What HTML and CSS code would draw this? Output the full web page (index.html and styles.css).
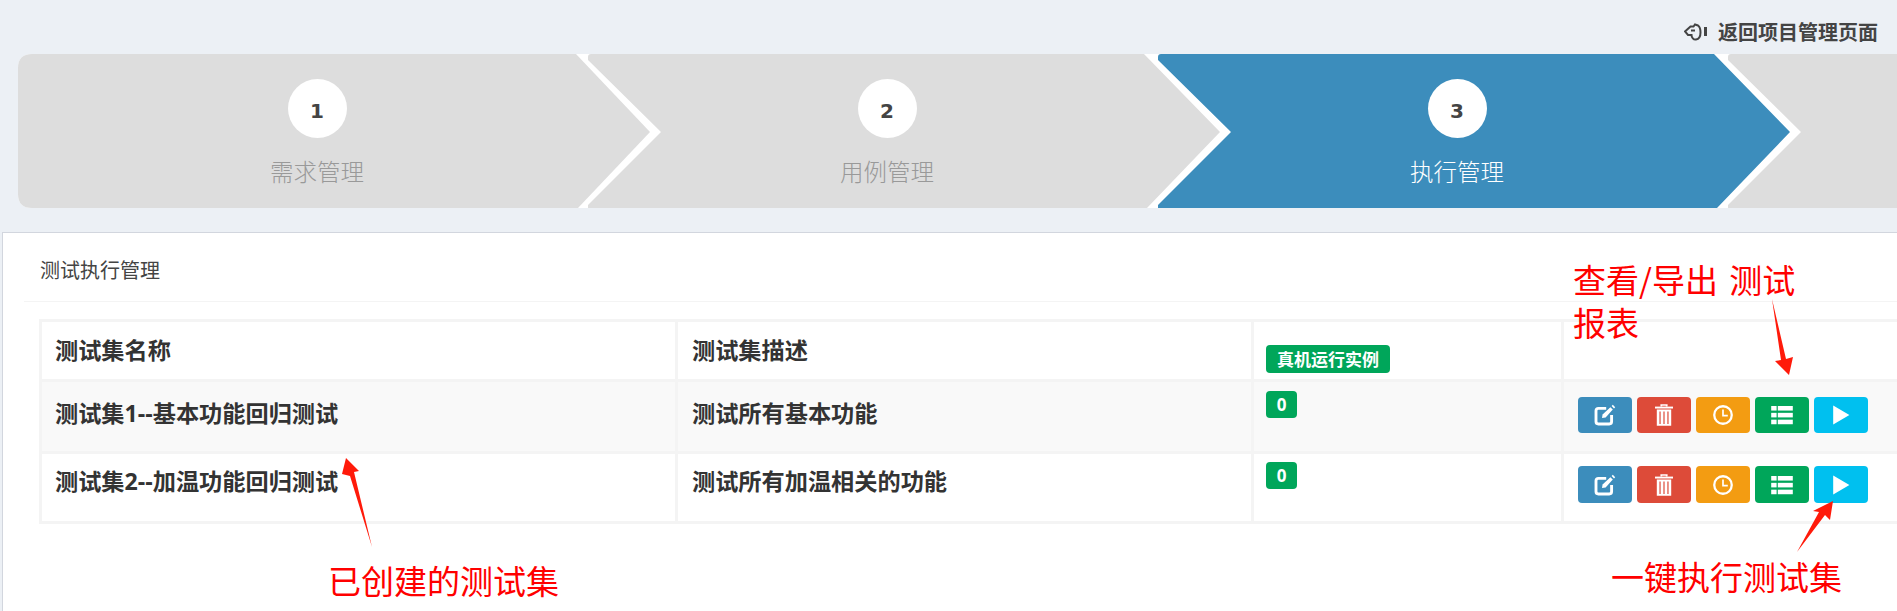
FILE: index.html
```html
<!DOCTYPE html>
<html lang="zh">
<head>
<meta charset="utf-8">
<title>测试执行管理</title>
<link rel="stylesheet" href="styles.css">
</head>
<body>
<header class="topbar">
  <a class="back-link">
    <svg class="back-icon" viewBox="0 0 23 19"><path d="M1 9.500 6.500 4.500H9.500L11 2.500 14 3.500C16 5 16.500 7 16.500 10.500 16.500 14 15 17 12 17.500 9.500 18 7.500 15.500 7.500 13H4L1 9.500Z M7 8.500H11" fill="none" stroke="#444" stroke-width="2"/><rect x="20" y="5" width="3" height="9" fill="#444"/></svg>
    <span>返回项目管理页面</span>
  </a>
</header>
<ol class="steps">
  <li class="step step-first">
    <span class="num">1</span>
    <span class="step-label">需求管理</span>
  </li>
  <li class="step">
    <span class="num">2</span>
    <span class="step-label">用例管理</span>
  </li>
  <li class="step step-active">
    <span class="num">3</span>
    <span class="step-label">执行管理</span>
  </li>
  <li class="step step-last"></li>
</ol>
<main class="panel">
  <h2 class="panel-title">测试执行管理</h2>
  <table class="grid">
    <colgroup>
      <col class="col-name"><col class="col-desc"><col class="col-count"><col class="col-ops">
    </colgroup>
    <tr class="row-head">
      <td>测试集名称</td>
      <td>测试集描述</td>
      <td class="cell-badge-head"><span class="badge badge-head">真机运行实例</span></td>
      <td></td>
    </tr>
    <tr class="row-odd">
      <td>测试集1--基本功能回归测试</td>
      <td>测试所有基本功能</td>
      <td><span class="badge">0</span></td>
      <td>
        <div class="ops">
          <button class="op op-blue"><svg viewBox="0 0 20 20"><use href="#i-edit"/></svg></button>
          <button class="op op-red"><svg viewBox="0 0 20 20"><use href="#i-trash"/></svg></button>
          <button class="op op-orange"><svg viewBox="0 0 20 20"><use href="#i-clock"/></svg></button>
          <button class="op op-green"><svg viewBox="0 0 20 20"><use href="#i-list"/></svg></button>
          <button class="op op-cyan"><svg viewBox="0 0 20 20"><use href="#i-play"/></svg></button>
        </div>
      </td>
    </tr>
    <tr class="row-even">
      <td>测试集2--加温功能回归测试</td>
      <td>测试所有加温相关的功能</td>
      <td><span class="badge">0</span></td>
      <td>
        <div class="ops">
          <button class="op op-blue"><svg viewBox="0 0 20 20"><use href="#i-edit"/></svg></button>
          <button class="op op-red"><svg viewBox="0 0 20 20"><use href="#i-trash"/></svg></button>
          <button class="op op-orange"><svg viewBox="0 0 20 20"><use href="#i-clock"/></svg></button>
          <button class="op op-green"><svg viewBox="0 0 20 20"><use href="#i-list"/></svg></button>
          <button class="op op-cyan"><svg viewBox="0 0 20 20"><use href="#i-play"/></svg></button>
        </div>
      </td>
    </tr>
  </table>
</main>

<div class="note note-report">查看/导出 测试<br>报表</div>
<div class="note note-sets">已创建的测试集</div>
<div class="note note-run">一键执行测试集</div>

<svg class="arrows" viewBox="0 0 1897 611">
  <polygon points="1772,299 1786,359 1793,357 1789,375 1775,361 1781,360" fill="#ff1a0a"/>
  <polygon points="346,458 359,471 354,472 372,547 350,476 342,474" fill="#ff1a0a"/>
  <polygon points="1833,501 1830,520 1825,515 1797,552 1819,512 1813,511" fill="#ff1a0a"/>
</svg>

<svg class="defs" width="0" height="0">
  <defs>
    <g id="i-edit" fill="none" stroke="#fff">
      <path d="M11 4.500H4.500Q2.500 4.500 2.500 6.500V15.500Q2.500 17.500 4.500 17.500H13.500Q15.500 17.500 15.500 15.500V10" stroke-width="2.400"/>
      <path d="M7.500 12.500 8 9.500 14.500 3.500 16.500 5.500 10.500 12Z" fill="#fff" stroke="none"/>
      <path d="M15.500 2.500 16.500 1.500 18.500 3.500 17.500 4.500Z" fill="#fff" stroke="none"/>
    </g>
    <g id="i-trash" fill="#fff">
      <rect x="2.500" y="3" width="15" height="1.600"/>
      <path d="M7 3V1H13V3H11.500V2.300H8.500V3Z"/>
      <path d="M4 5.500H16V19H4ZM6.200 7V17.500H7.200V7ZM9.500 7V17.500H10.500V7ZM12.800 7V17.500H13.800V7Z" fill-rule="evenodd"/>
    </g>
    <g id="i-clock" fill="none" stroke="#fff">
      <circle cx="10" cy="10" r="7.300" stroke-width="1.900"/>
      <path d="M10 5.500V10.500H14" stroke-width="1.400"/>
    </g>
    <g id="i-list" fill="#fff">
      <rect x="1" y="2.500" width="4.500" height="3.800"/>
      <rect x="6.500" y="2.500" width="12.500" height="3.800"/>
      <rect x="1" y="8.200" width="4.500" height="3.800"/>
      <rect x="6.500" y="8.200" width="12.500" height="3.800"/>
      <rect x="1" y="13.900" width="4.500" height="3.800"/>
      <rect x="6.500" y="13.900" width="12.500" height="3.800"/>
    </g>
    <g id="i-play" fill="#fff"><path d="M3.500 2 17 10 3.500 18Z"/></g>
  </defs>
</svg>
</body>
</html>
```

FILE: styles.css
```css
* { box-sizing: border-box; }

html, body {
  margin: 0;
  height: 611px;
  overflow: hidden;
}

body {
  position: relative;
  background: #ecf0f5;
  font-family: "Open Sans", "Noto Sans CJK SC", sans-serif;
  color: #333;
}

.topbar {
  display: flex;
  justify-content: flex-end;
  height: 54px;
  padding: 17px 19px 0 0;
}

.back-link {
  display: flex;
  align-items: center;
  height: 28px;
  gap: 11px;
  font-size: 20px;
  font-weight: 700;
  color: #444;
}

.back-icon { width: 23px; height: 19px; }

.steps {
  display: flex;
  margin: 0;
  padding: 0 0 0 18px;
  list-style: none;
  height: 154px;
}

.step {
  position: relative;
  flex: 0 0 570px;
  height: 154px;
  padding-top: 25px;
  color: #999;
  display: flex;
  flex-direction: column;
  align-items: center;
}

.step > * { position: relative; z-index: 2; transform: translateX(14px); }

.step::before,
.step::after {
  content: "";
  position: absolute;
  top: 0;
  left: 0;
  width: 660px;
  height: 154px;
}

.step::before {
  z-index: 0;
  background: #fff;
  clip-path: path("M0 0H572L646 78 572 154H0L72 78Z");
}

.step::after {
  z-index: 1;
  background: #ddd;
  clip-path: path("M0 6 73 78 0 151V154H559L632 78 556 0H3Q0 0 0 3Z");
}

.step-first::before { clip-path: path("M14 0H572L646 78 572 154H14Q0 154 0 140V14Q0 0 14 0Z"); }

.step-first::after {
  clip-path: path("M14 0H558L632 78 560 154H14Q0 154 0 140V14Q0 0 14 0Z");
}

.step-active { color: #fff; }
.step-active::after { background: #3c8dbc; }

.step-last::before { background: transparent; }

.num {
  display: flex;
  align-items: center;
  justify-content: center;
  width: 59px;
  height: 59px;
  padding-top: 4px;
  border-radius: 50%;
  background: #fff;
  color: #444;
  font-family: "DejaVu Sans", sans-serif;
  font-size: 20px;
  font-weight: 700;
}

.step-label {
  margin-top: 17px;
  font-size: 23.500px;
  font-weight: 300;
  line-height: 34px;
}

.panel {
  margin-top: 24px;
  margin-left: 2px;
  height: 400px;
  padding: 0 0 0 21px;
  background: #fff;
  border-top: 1px solid #d2d6de;
  border-left: 1px solid #d2d6de;
}

.panel-title {
  margin: 0;
  height: 69px;
  padding: 24px 0 0 16px;
  border-bottom: 1px solid #f4f4f4;
  font-size: 20px;
  font-weight: 400;
  line-height: 28px;
  color: #444;
}

.grid {
  margin: 17px 0 0 15px;
  width: 1900px;
  border-collapse: collapse;
  table-layout: fixed;
  font-size: 23.200px;
  font-weight: 700;
}

.col-name { width: 636px; }
.col-desc { width: 576px; }
.col-count { width: 310px; }
.col-ops { width: 378px; }

.grid td {
  border: 3px solid #f4f4f4;
  padding: 14px 14px 0 13px;
  vertical-align: top;
  line-height: 32px;
}

.grid td:nth-child(2),
.grid td:nth-child(4) { padding-left: 14px; }
.grid td:nth-child(3) { padding-left: 12px; }

.row-head { height: 60px; }
.row-odd { height: 72px; background: #f9f9f9; }
.row-even { height: 70px; }

.row-head td { padding-top: 12px; }
.row-head .cell-badge-head { padding-top: 23px; }

.row-odd td { padding-top: 15px; }
.row-even td { padding-top: 11px; }

.row-odd td:nth-child(3) { padding-top: 9px; }
.row-even td:nth-child(3) { padding-top: 8px; }
.row-odd td:nth-child(4) { padding-top: 15px; }
.row-even td:nth-child(4) { padding-top: 12px; }

.badge {
  display: inline-flex;
  align-items: center;
  justify-content: center;
  height: 27px;
  width: 31px;
  border-radius: 4px;
  background: #00a65a;
  color: #fff;
  font-size: 17px;
  font-weight: 700;
  line-height: 1;
  vertical-align: top;
}

.badge-head {
  height: 28px;
  width: 124px;
}

.ops { display: flex; gap: 5px; }

.op {
  display: flex;
  align-items: center;
  justify-content: center;
  width: 54px;
  height: 36px;
  padding: 0;
  border: 0;
  border-radius: 4px;
}

.row-even .op { height: 37px; }

.op svg { width: 24px; height: 24px; display: block; }

.op-blue { background: #3c8dbc; }
.op-red { background: #dd4b39; }
.op-orange { background: #f39c12; }
.op-green { background: #00a65a; }
.op-cyan { background: #00c0ef; }

.note {
  position: absolute;
  color: #ff0000;
  font-family: "Noto Sans CJK SC", sans-serif;
  font-size: 33px;
  font-weight: 400;
  line-height: 43px;
  white-space: nowrap;
}

.note-report { left: 1573px; top: 258px; word-spacing: 4px; }
.note-sets { left: 328px; top: 559px; }
.note-run { left: 1611px; top: 555px; }

.arrows {
  position: absolute;
  top: 0;
  left: 0;
  width: 1897px;
  height: 611px;
  pointer-events: none;
}

.defs { position: absolute; }
```
